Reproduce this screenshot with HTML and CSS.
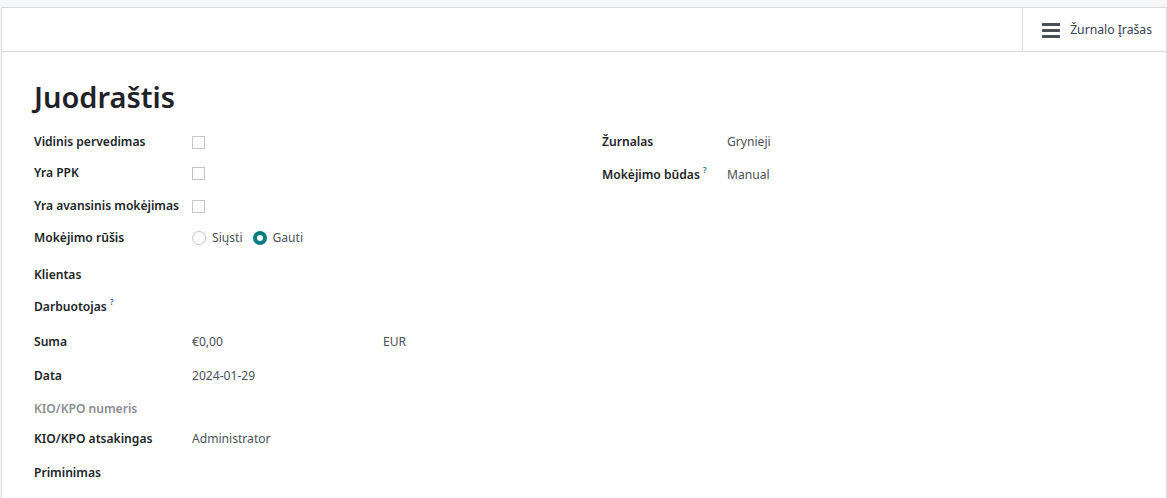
FILE: index.html
```html
<!DOCTYPE html>
<html lang="lt">
<head>
<meta charset="utf-8">
<link rel="stylesheet" href="styles.css">
</head>
<body>
<div class="strip"></div>
<div class="panel">
  <div class="control-bar">
    <div class="spacer"></div>
    <button class="journal-btn" type="button">
      <svg class="ham" width="18" height="16" viewBox="0 0 18 16"><rect x="0" y="1" width="18" height="3" rx="0.5"/><rect x="0" y="7" width="18" height="3" rx="0.5"/><rect x="0" y="13" width="18" height="3" rx="0.5"/></svg>
      <span>Žurnalo Įrašas</span>
    </button>
  </div>
  <div class="sheet">
    <h1 class="title">Juodraštis</h1>
    <div class="groups">
      <div class="group left">
        <div class="label">Vidinis pervedimas</div><div class="val"><span class="check"></span></div>
        <div class="label">Yra PPK</div><div class="val"><span class="check"></span></div>
        <div class="label">Yra avansinis mokėjimas</div><div class="val"><span class="check"></span></div>
        <div class="label">Mokėjimo rūšis</div><div class="val radios"><span class="radio"></span><span class="rtext">Siųsti</span><span class="radio on"></span><span class="rtext">Gauti</span></div>
        <div class="label">Klientas</div><div class="val"></div>
        <div class="label">Darbuotojas<sup class="help">?</sup></div><div class="val"></div>
        <div class="label">Suma</div><div class="val amount"><span class="amt">€0,00</span><span class="cur">EUR</span></div>
        <div class="label">Data</div><div class="val">2024-01-29</div>
        <div class="label muted">KIO/KPO numeris</div><div class="val"></div>
        <div class="label">KIO/KPO atsakingas</div><div class="val">Administrator</div>
        <div class="label">Priminimas</div><div class="val"></div>
      </div>
      <div class="group right">
        <div class="label">Žurnalas</div><div class="val">Grynieji</div>
        <div class="label">Mokėjimo būdas<sup class="help">?</sup></div><div class="val">Manual</div>
      </div>
    </div>
  </div>
</div>
</body>
</html>
```
FILE: styles.css
```css
html, body {
  margin: 0;
  padding: 0;
}
body {
  background: #f5f6f8;
  font-family: "Noto Sans", "Open Sans", sans-serif;
  font-size: 12.1px;
  color: #212529;
  width: 1167px;
  height: 498px;
  overflow: hidden;
}
.strip {
  height: 7px;
  background: #f5f6f8;
}
.panel {
  margin-left: 1px;
  background: #fff;
  border-left: 1px solid #d8dadd;
  border-top: 1px solid #d8dadd;
  border-right: 1px solid #d8dadd;
  height: 491px;
  box-sizing: border-box;
}
.control-bar {
  display: flex;
  height: 44px;
  border-bottom: 1px solid #d8dadd;
  box-sizing: border-box;
}
.spacer { flex: 1; }
.journal-btn {
  display: flex;
  align-items: center;
  gap: 10px;
  padding: 0 14px 0 19px;
  border: 0;
  border-left: 1px solid #d8dadd;
  background: #fff;
  font-family: inherit;
  font-size: 12.2px;
  color: #374151;
  height: 43px;
}
.ham { fill: #4a4f57; }
.sheet {
  padding: 0 0 0 32px;
}
.title {
  margin: 0;
  padding-top: 24px;
  font-size: 29px;
  font-weight: 600;
  line-height: 42px;
  color: #1f2328;
}
.groups {
  display: grid;
  grid-template-columns: 568px 1fr;
  margin-top: 15px;
}
.group {
  display: grid;
  align-items: start;
  line-height: 18px;
}
.left {
  grid-template-columns: 158px 1fr;
  grid-template-rows: 31px 33px 32px 37px 32px 35px 34px 33px 30px 34px 34px;
}
.right {
  grid-template-columns: 125px 1fr;
  grid-template-rows: 33px 33px;
}
.label {
  font-weight: 600;
  color: #212529;
  white-space: nowrap;
}
.label.muted { color: #8a8d91; }
.help {
  font-size: 8.5px;
  color: #2f6f9f;
  font-weight: 600;
  margin-left: 3px;
  vertical-align: 6px;
  line-height: 0;
}
.val {
  color: #495057;
  display: flex;
  align-items: center;
  height: 18px;
}
.check {
  width: 11px;
  height: 11px;
  border: 1px solid #c3c5c8;
  display: inline-block;
}
.radio {
  border: 1px solid #c3c5c8;
  border-radius: 50%;
  display: inline-block;
  box-sizing: border-box;
  width: 14px;
  height: 14px;
}
.radio.on {
  border: 4px solid #017e84;
  background: #fff;
}
.rtext { margin: 0 10px 0 6px; }
.amt { width: 191px; }
```
